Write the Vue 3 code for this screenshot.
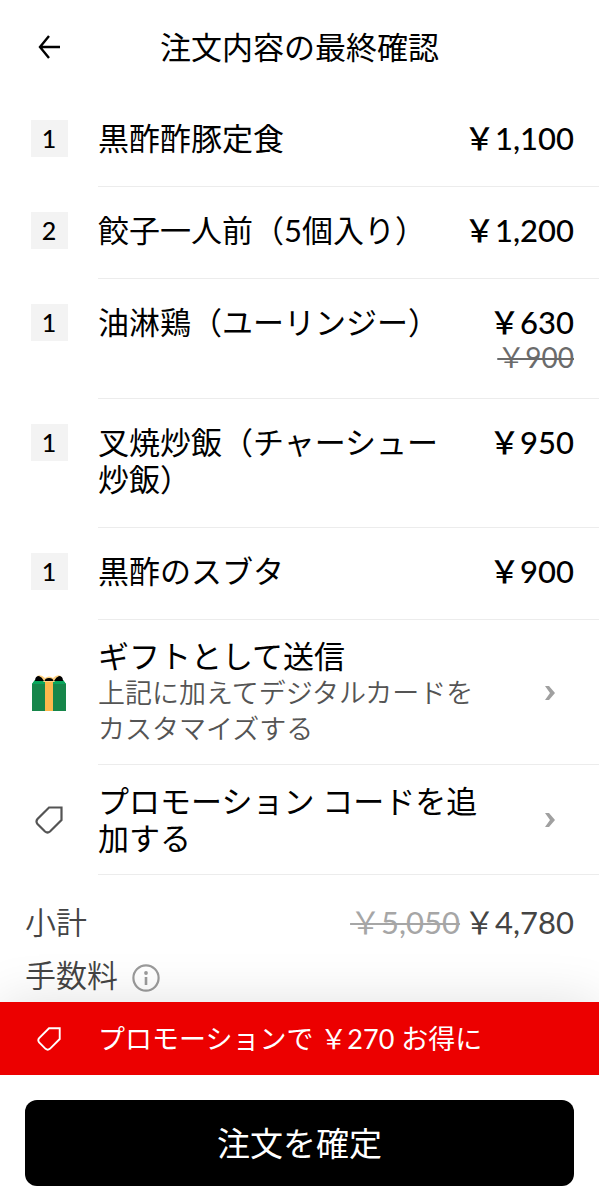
<script setup>
const items = [
  { qty: 1, name: '黒酢酢豚定食', price: '￥1,100' },
  { qty: 2, name: '餃子一人前（5個入り）', price: '￥1,200' },
  { qty: 1, name: '油淋鶏（ユーリンジー）', price: '￥630', was: '￥900' },
  { qty: 1, name: '叉焼炒飯（チャーシュー炒飯）', price: '￥950' },
  { qty: 1, name: '黒酢のスブタ', price: '￥900' },
]
</script>

<template>
  <div class="page" lang="ja">
    <header class="header">
      <button class="back" type="button" aria-label="戻る">
        <svg width="24" height="26" viewBox="0 0 24 26" fill="none" stroke="#000" stroke-width="2.4">
          <path d="M12 2L3 13L12 24M3 13H23" />
        </svg>
      </button>
      <h1>注文内容の最終確認</h1>
    </header>

    <main>
      <ul class="items">
        <li v-for="item in items" :key="item.name" class="row">
          <span class="lead"><span class="qty">{{ item.qty }}</span></span>
          <div class="item-body">
            <span class="name">{{ item.name }}</span>
            <span class="prices">
              <span class="price">{{ item.price }}</span>
              <del v-if="item.was" class="was">{{ item.was }}</del>
            </span>
          </div>
        </li>
      </ul>

      <button class="row option" type="button">
        <span class="lead">
          <svg width="36" height="38" viewBox="0 0 36 38">
            <path d="M1 10L4 6H32L35 10V37H1Z" fill="#16864a" />
            <path d="M1 10L4 6H32L35 10Z" fill="#08a65b" />
            <path d="M14 7H22V37H14Z" fill="#ffb84d" />
            <path d="M6 2Q10 0 14 4Q18 1 22 4Q26 0 30 2L23 8H13Z" fill="#ffd182" />
            <path d="M4 7Q4 2 8 2Q11 3 13 7Z" fill="#000" />
            <path d="M32 7Q32 2 28 2Q25 3 23 7Z" fill="#000" />
            <path d="M13.500 7Q14 4 18 4Q22 4 22.500 7Z" fill="#000" />
          </svg>
        </span>
        <span class="option-body">
          <span class="option-text">
            <span class="title">ギフトとして送信</span>
            <span class="sub">上記に加えてデジタルカードをカスタマイズする</span>
          </span>
          <svg class="chevron" width="10" height="16" viewBox="0 0 10 16" fill="#a0a0a0">
            <path d="M0 1H4L10 8L4 15H0L5 8Z" />
          </svg>
        </span>
      </button>

      <button class="row option" type="button">
        <span class="lead">
          <svg width="28" height="28" viewBox="0 0 28 28" fill="none" stroke="#545454" stroke-width="2.2">
            <path d="M14 1.500H26.500V14L15 25.500Q12.500 27.500 10 25.500L2.500 18Q0.500 15.500 2.500 13Z" />
          </svg>
        </span>
        <span class="option-body">
          <span class="option-text">
            <span class="title">プロモーション コードを追加する</span>
          </span>
          <svg class="chevron" width="10" height="16" viewBox="0 0 10 16" fill="#a0a0a0">
            <path d="M0 1H4L10 8L4 15H0L5 8Z" />
          </svg>
        </span>
      </button>

      <dl class="summary">
        <div class="line">
          <dt>小計</dt>
          <dd><del>￥5,050</del><span>￥4,780</span></dd>
        </div>
        <div class="line">
          <dt>
            手数料
            <button class="info" type="button" aria-label="手数料の詳細">
              <svg width="28" height="28" viewBox="0 0 28 28">
                <circle cx="14" cy="14" r="12.600" fill="none" stroke="#9b9b9b" stroke-width="2.200" />
                <circle cx="14" cy="9" r="1.900" fill="#9b9b9b" />
                <path d="M12.700 13H15.300V21H12.700Z" fill="#9b9b9b" />
              </svg>
            </button>
          </dt>
        </div>
      </dl>
    </main>

    <footer class="footer">
      <div class="promo">
        <span class="lead">
          <svg width="24" height="24" viewBox="0 0 28 28" fill="none" stroke="#fff" stroke-width="2.200">
            <path d="M14 1.500H26.500V14L15 25.500Q12.500 27.500 10 25.500L2.500 18Q0.500 15.500 2.500 13Z" />
          </svg>
        </span>
        <span>プロモーションで ￥270 お得に</span>
      </div>
      <div class="action">
        <button class="confirm" type="button">注文を確定</button>
      </div>
    </footer>
  </div>
</template>

<style>
body {
  margin: 0;
  background: #fff;
}
</style>

<style scoped>
.page {
  display: flex;
  flex-direction: column;
  min-height: 100vh;
  background: #fff;
  color: #000;
  font-family: Lato, "Noto Sans CJK JP", sans-serif;
  font-size: 31px;
  line-height: 37px;
}
button {
  margin: 0;
  padding: 0;
  border: 0;
  background: none;
  color: inherit;
  font: inherit;
  text-align: left;
  cursor: pointer;
}
svg {
  display: block;
}
.header {
  display: grid;
  grid-template-columns: 98px 1fr 98px;
  align-items: center;
  height: 94px;
  padding-bottom: 1px;
}
.back {
  display: flex;
  justify-content: center;
}
h1 {
  margin: 0;
  font-size: 31px;
  font-weight: 400;
  text-align: center;
}
main {
  flex: 1;
}
.items {
  margin: 0;
  padding: 0;
  list-style: none;
}
.row {
  display: flex;
  width: 100%;
}
.lead {
  display: flex;
  flex: none;
  justify-content: center;
  width: 98px;
}
.items .lead {
  padding-top: 25px;
}
.qty {
  width: 37px;
  height: 37px;
  background: #f3f3f3;
  font-size: 25px;
  font-weight: 500;
  text-align: center;
}
.item-body {
  display: flex;
  flex: 1;
  justify-content: space-between;
  gap: 24px;
  padding: 25px 25px 24px 0;
  border-bottom: 1px solid #ececec;
}
.name {
  padding-bottom: 5px;
}
.prices {
  display: flex;
  flex: none;
  flex-direction: column;
  align-items: flex-end;
}
.price {
  font-weight: 500;
}
.was {
  color: #6b6b6b;
  font-size: 28px;
  line-height: 33px;
  font-weight: 400;
  text-decoration-thickness: 2px;
}
.option {
  align-items: stretch;
}
.option .lead {
  align-items: center;
}
.option-body {
  display: flex;
  flex: 1;
  align-items: center;
  justify-content: space-between;
  gap: 48px;
  padding: 18px 44px 17px 0;
  border-bottom: 1px solid #ececec;
}
.option-text {
  display: flex;
  flex-direction: column;
}
.sub {
  color: #545454;
  font-size: 27px;
  line-height: 36px;
  font-weight: 350;
}
.chevron {
  flex: none;
}
.summary {
  display: flex;
  flex-direction: column;
  gap: 16px;
  margin: 0;
  padding: 29px 25px 8px;
  color: #444;
}
.line {
  display: flex;
  justify-content: space-between;
  font-weight: 350;
}
dt {
  display: flex;
  align-items: center;
  gap: 14px;
}
.info {
  padding-top: 4px;
}
dd {
  display: flex;
  gap: 4px;
  margin: 0;
  font-weight: 400;
}
dd del {
  color: #a6a6a6;
  text-decoration-thickness: 2px;
}
.footer {
  position: sticky;
  bottom: 0;
  background: #fff;
  box-shadow: 0 0 50px rgba(0, 0, 0, 0.12);
}
.promo {
  display: flex;
  align-items: center;
  padding: 18px 0;
  background: #ec0000;
  color: #fff;
  font-size: 27px;
}
.action {
  padding: 25px 25px 14px;
}
.confirm {
  width: 100%;
  padding: 24px;
  border-radius: 12px;
  background: #000;
  color: #fff;
  font-size: 33px;
  line-height: 38px;
  text-align: center;
}
</style>
